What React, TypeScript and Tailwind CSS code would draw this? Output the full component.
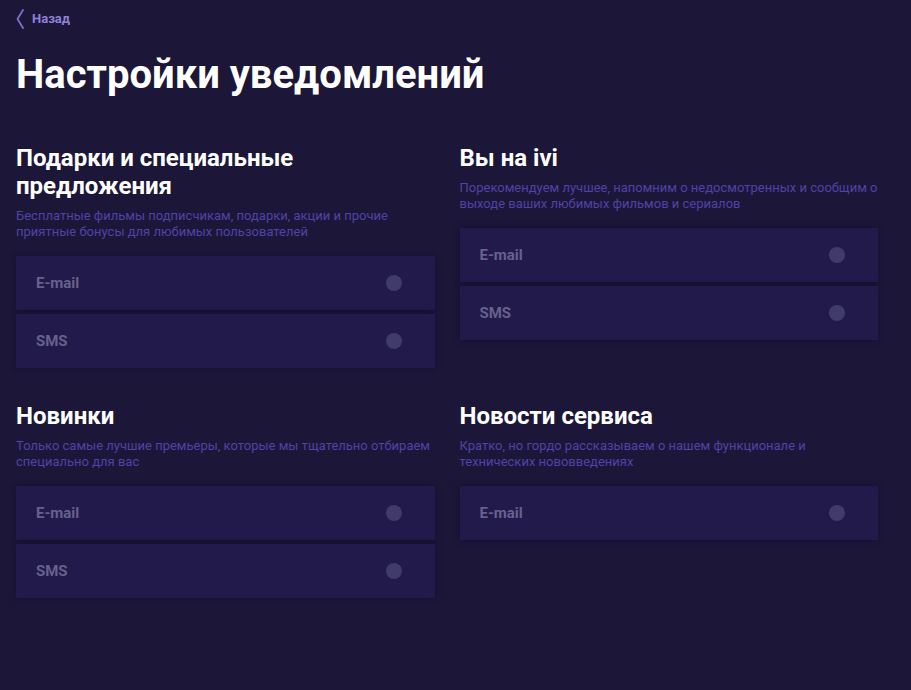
import React from 'react'

type Section = {
  title: React.ReactNode
  text: string
  channels: string[]
}

const left: Section[] = [
  {
    title: (
      <>
        Подарки и специальные
        <br />
        предложения
      </>
    ),
    text: 'Бесплатные фильмы подписчикам, подарки, акции и прочие приятные бонусы для любимых пользователей',
    channels: ['E-mail', 'SMS'],
  },
  {
    title: 'Новинки',
    text: 'Только самые лучшие премьеры, которые мы тщательно отбираем специально для вас',
    channels: ['E-mail', 'SMS'],
  },
]

const right: Section[] = [
  {
    title: 'Вы на ivi',
    text: 'Порекомендуем лучшее, напомним о недосмотренных и сообщим о выходе ваших любимых фильмов и сериалов',
    channels: ['E-mail', 'SMS'],
  },
  {
    title: 'Новости сервиса',
    text: 'Кратко, но гордо рассказываем о нашем функционале и технических нововведениях',
    channels: ['E-mail'],
  },
]

function ChannelRow({ label }: { label: string }) {
  return (
    <div className="flex h-[54px] items-center justify-between bg-[#211a4a] pl-5 pr-[33px] shadow-[0_0_6px_rgba(10,6,30,0.45)]">
      <span className="text-[15px] font-bold text-[#67618e]">{label}</span>
      <span className="h-4 w-4 rounded-full bg-[#413b6b]" />
    </div>
  )
}

function Block({ s }: { s: Section }) {
  return (
    <div>
      <h2 className="mb-2 text-[24px] font-bold leading-7 text-white">{s.title}</h2>
      <p className="mb-4 text-[13px] leading-4 text-[#5042a6]">{s.text}</p>
      <div className="flex flex-col gap-1">
        {s.channels.map((c) => (
          <ChannelRow key={c} label={c} />
        ))}
      </div>
    </div>
  )
}

export default function App() {
  return (
    <div
      className="min-h-[690px] bg-[#1c1739] px-4 pt-[9px] pb-10"
      style={{ fontFamily: 'Roboto, "Noto Sans", sans-serif' }}
    >
      <a href="#" className="flex h-5 items-center gap-2 text-[13px] font-bold text-[#8c80d8]">
        <svg width="8" height="20" viewBox="0 0 8 20" fill="none">
          <path d="M7 1L1.5 10L7 19" stroke="#7d70c8" strokeWidth="1.8" strokeLinecap="round" strokeLinejoin="round" />
        </svg>
        Назад
      </a>
      <h1 className="mt-[22px] text-[40px] font-bold leading-[48px] text-white">Настройки уведомлений</h1>
      <div className="mt-[45px] grid w-[862px] grid-cols-2 gap-x-[25px] gap-y-[34px]">
        <Block s={left[0]} />
        <Block s={right[0]} />
        <Block s={left[1]} />
        <Block s={right[1]} />
      </div>
    </div>
  )
}
